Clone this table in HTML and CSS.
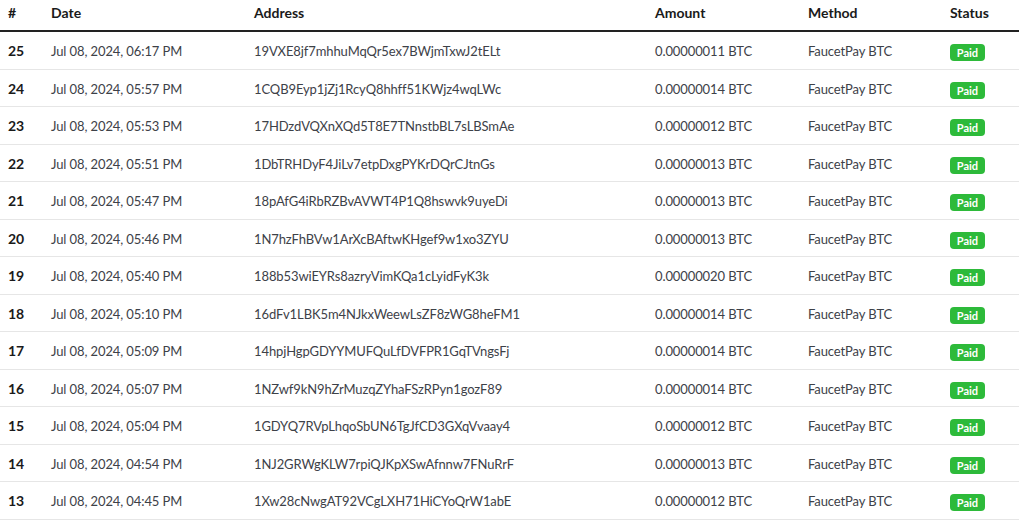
FILE: index.html
```html
<!DOCTYPE html>
<html>
<head>
<meta charset="utf-8">
<link rel="stylesheet" href="styles.css">
</head>
<body>
<table class="tx">
<colgroup>
<col class="c-id"><col class="c-date"><col class="c-addr"><col class="c-amt"><col class="c-meth"><col class="c-stat">
</colgroup>
<thead>
<tr><th>#</th><th>Date</th><th>Address</th><th>Amount</th><th>Method</th><th>Status</th></tr>
</thead>
<tbody>
<tr><td class="id">25</td><td>Jul 08, 2024, 06:17 PM</td><td>19VXE8jf7mhhuMqQr5ex7BWjmTxwJ2tELt</td><td>0.00000011 BTC</td><td>FaucetPay BTC</td><td><span class="badge">Paid</span></td></tr>
<tr><td class="id">24</td><td>Jul 08, 2024, 05:57 PM</td><td>1CQB9Eyp1jZj1RcyQ8hhff51KWjz4wqLWc</td><td>0.00000014 BTC</td><td>FaucetPay BTC</td><td><span class="badge">Paid</span></td></tr>
<tr><td class="id">23</td><td>Jul 08, 2024, 05:53 PM</td><td>17HDzdVQXnXQd5T8E7TNnstbBL7sLBSmAe</td><td>0.00000012 BTC</td><td>FaucetPay BTC</td><td><span class="badge">Paid</span></td></tr>
<tr><td class="id">22</td><td>Jul 08, 2024, 05:51 PM</td><td>1DbTRHDyF4JiLv7etpDxgPYKrDQrCJtnGs</td><td>0.00000013 BTC</td><td>FaucetPay BTC</td><td><span class="badge">Paid</span></td></tr>
<tr><td class="id">21</td><td>Jul 08, 2024, 05:47 PM</td><td>18pAfG4iRbRZBvAVWT4P1Q8hswvk9uyeDi</td><td>0.00000013 BTC</td><td>FaucetPay BTC</td><td><span class="badge">Paid</span></td></tr>
<tr><td class="id">20</td><td>Jul 08, 2024, 05:46 PM</td><td>1N7hzFhBVw1ArXcBAftwKHgef9w1xo3ZYU</td><td>0.00000013 BTC</td><td>FaucetPay BTC</td><td><span class="badge">Paid</span></td></tr>
<tr><td class="id">19</td><td>Jul 08, 2024, 05:40 PM</td><td>188b53wiEYRs8azryVimKQa1cLyidFyK3k</td><td>0.00000020 BTC</td><td>FaucetPay BTC</td><td><span class="badge">Paid</span></td></tr>
<tr><td class="id">18</td><td>Jul 08, 2024, 05:10 PM</td><td>16dFv1LBK5m4NJkxWeewLsZF8zWG8heFM1</td><td>0.00000014 BTC</td><td>FaucetPay BTC</td><td><span class="badge">Paid</span></td></tr>
<tr><td class="id">17</td><td>Jul 08, 2024, 05:09 PM</td><td>14hpjHgpGDYYMUFQuLfDVFPR1GqTVngsFj</td><td>0.00000014 BTC</td><td>FaucetPay BTC</td><td><span class="badge">Paid</span></td></tr>
<tr><td class="id">16</td><td>Jul 08, 2024, 05:07 PM</td><td>1NZwf9kN9hZrMuzqZYhaFSzRPyn1gozF89</td><td>0.00000014 BTC</td><td>FaucetPay BTC</td><td><span class="badge">Paid</span></td></tr>
<tr><td class="id">15</td><td>Jul 08, 2024, 05:04 PM</td><td>1GDYQ7RVpLhqoSbUN6TgJfCD3GXqVvaay4</td><td>0.00000012 BTC</td><td>FaucetPay BTC</td><td><span class="badge">Paid</span></td></tr>
<tr><td class="id">14</td><td>Jul 08, 2024, 04:54 PM</td><td>1NJ2GRWgKLW7rpiQJKpXSwAfnnw7FNuRrF</td><td>0.00000013 BTC</td><td>FaucetPay BTC</td><td><span class="badge">Paid</span></td></tr>
<tr><td class="id">13</td><td>Jul 08, 2024, 04:45 PM</td><td>1Xw28cNwgAT92VCgLXH71HiCYoQrW1abE</td><td>0.00000012 BTC</td><td>FaucetPay BTC</td><td><span class="badge">Paid</span></td></tr>
</tbody>
</table>
</body>
</html>
```
FILE: styles.css
```css
html, body {
  margin: 0;
  padding: 0;
  background: #fff;
}
body {
  font-family: "Lato", "Liberation Sans", sans-serif;
  font-size: 13px;
  letter-spacing: -0.1px;
  color: #3d4148;
}
.tx {
  width: 1019px;
  border-collapse: collapse;
  table-layout: fixed;
}
.c-id { width: 43px; }
.c-date { width: 203px; }
.c-addr { width: 401px; }
.c-amt { width: 153px; }
.c-meth { width: 142px; }
.c-stat { width: 77px; }
.tx th {
  text-align: left;
  font-size: 14px;
  letter-spacing: 0;
  font-weight: 700;
  color: #1a1a1a;
  padding: 3px 8px 7px;
  line-height: 20px;
  border-bottom: 2px solid #222;
}
.tx td {
  padding: 9px 8px 7px;
  line-height: 20.5px;
  height: 20.5px;
  border-bottom: 1px solid #e6e6e6;
  white-space: nowrap;
  vertical-align: middle;
}
.tx td.id {
  font-size: 14px;
  letter-spacing: 0;
  font-weight: 700;
  color: #1a1a1a;
}
.badge {
  display: inline-block;
  background: #2dba3a;
  color: #fff;
  font-size: 11px;
  letter-spacing: 0;
  font-weight: 700;
  line-height: 17px;
  width: 35px;
  text-align: center;
  border-radius: 4px;
  vertical-align: middle;
}
```
